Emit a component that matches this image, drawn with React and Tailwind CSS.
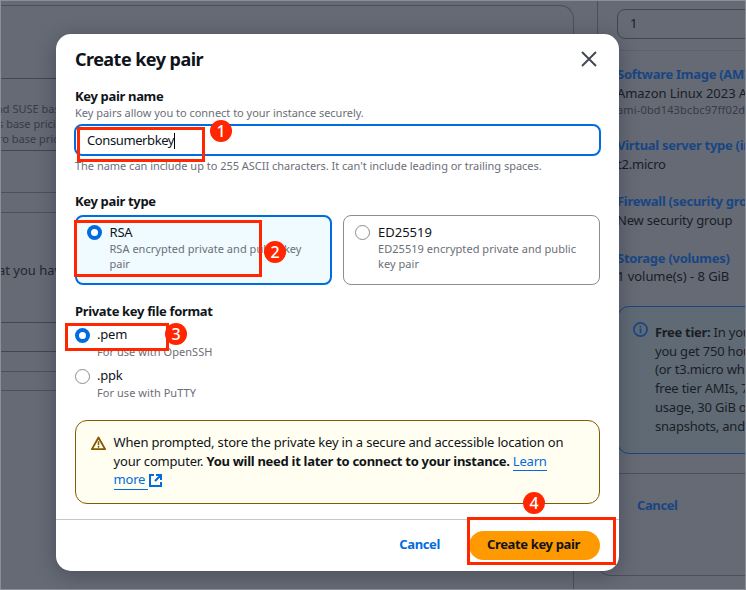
const Badge = ({ n, className }) => (
  <div className={`absolute flex size-[22px] items-center justify-center rounded-full bg-[#ff2600] font-['Noto_Sans',sans-serif] text-[16px] font-medium leading-none text-white ${className}`}>
    {n}
  </div>
);

const Mark = ({ className }) => <div className={`absolute border-[#ff2600] ${className}`} />;

const Radio = ({ checked }) => (
  <span className={`flex size-[15px] shrink-0 items-center justify-center rounded-full ${checked ? "bg-[#006ce0]" : "border border-[#8c8c94] bg-white"}`}>
    {checked && <span className="size-[6.4px] rounded-full bg-white" />}
  </span>
);

const Title = ({ children, className }) => (
  <div className={`text-[13px] font-bold leading-[18px] tracking-[-0.33px] ${className}`}>{children}</div>
);

const Hint = ({ children, className }) => (
  <div className={`whitespace-nowrap text-[11px] leading-[15px] text-[#6c6e78] ${className}`}>{children}</div>
);

function LeftPanel() {
  return (
    <div className="mt-[5px] w-[574px] shrink-0 rounded-tr-[14px] border-r border-t border-[#4c505c]">
      <div className="h-[73px] border-b border-[#424650]" />
      <div className="h-[72px] overflow-hidden whitespace-nowrap border-b border-[#424650] pt-[22px] text-[11px] leading-[15px] text-[#373b44]">
        <div className="-ml-1">nd SUSE base</div>
        <div className="-ml-[2px]">s base pricing</div>
        <div className="-ml-[2px]">ro base pricing</div>
      </div>
      <div className="h-[42px] border-b border-[#4c505c]" />
      <div className="h-5 border-b border-[#4c505c]" />
      <div className="h-[110px] border-b border-[#424650] pt-[48px] text-[13px] leading-[18px] text-[#23272f]">
        <div className="-ml-[2px] whitespace-nowrap">at you have</div>
      </div>
      <div className="h-[29px] border-b border-[#424650]" />
      <div className="h-5 border-b border-[#4c505c]" />
      <div className="h-[19px] border-b border-[#4c505c]" />
    </div>
  );
}

function SummaryPanel() {
  return (
    <div className="ml-[23px] flex h-[575.5px] w-[149px] flex-col overflow-hidden whitespace-nowrap rounded-bl-[14px] border-b border-l border-[#4c505c] text-[13px] leading-[18px] tracking-[-0.2px] text-[#191e26]">
      <div className="ml-[19px] mt-[9px] h-[30px] w-[170px] rounded-[8px] border border-[#424650] pl-[12px] pt-[4px]">1</div>
      <div className="mt-[11px] h-px bg-[#5c616c]" />
      <div className="ml-[19px] mt-[14px] font-bold tracking-[-0.28px] text-[#194682]">Software Image (AMI)</div>
      <div className="ml-[19px] mt-px h-[18px] tracking-[-0.05px]">Amazon Linux 2023 AMI</div>
      <div className="ml-[19px] text-[11px] leading-4 tracking-[0.15px] text-[#373b44]">ami-0bd143bcbc97ff02d</div>
      <div className="ml-[19px] mt-[18px] font-bold tracking-[-0.28px] text-[#194682]">Virtual server type (instance type)</div>
      <div className="ml-[19px] mt-px">t2.micro</div>
      <div className="ml-[19px] mt-[19px] font-bold tracking-[-0.28px] text-[#194682]">Firewall (security group)</div>
      <div className="ml-[19px] mt-px">New security group</div>
      <div className="ml-[19px] mt-[20px] font-bold tracking-[-0.28px] text-[#194682]">Storage (volumes)</div>
      <div className="ml-[19px] tracking-[-0.05px]">1 volume(s) - 8 GiB</div>
      <div className="ml-[19px] mt-[21px] flex h-[148px] w-[200px] shrink-0 gap-[7px] rounded-[12px] border border-[#194682] bg-[#5f6a75] pl-[15px] pt-[15px]">
        <svg className="size-[15px] shrink-0" viewBox="0 0 16 16" fill="none" stroke="#194682" strokeWidth="1.8">
          <circle cx="8" cy="8" r="7" />
          <path d="M8 7v5M8 4v1.8" />
        </svg>
        <div className="pt-px text-[13px] leading-[18.7px] tracking-[-0.2px]">
          <div><b className="tracking-[-0.3px]">Free tier:</b> In your first year</div>
          <div>you get 750 hours</div>
          <div>(or t3.micro where</div>
          <div>free tier AMIs, 750</div>
          <div>usage, 30 GiB of</div>
          <div>snapshots, and 100</div>
        </div>
      </div>
      <div className="mt-[19px] h-px bg-[#4c505c]" />
      <div className="ml-[39px] mt-[22px] font-bold tracking-[-0.4px] text-[#194682]">Cancel</div>
    </div>
  );
}

function Dialog() {
  return (
    <div className="absolute left-[56px] top-[34px] flex h-[537px] w-[563px] flex-col rounded-[15px] bg-white shadow-[0_4px_20px_1px_rgba(0,7,22,0.25)]">
      <div className="flex h-[53px] items-start justify-between pl-[19px] pr-[22px] pt-[13px]">
        <h1 className="text-[18px] font-bold leading-6 tracking-[-0.54px]">Create key pair</h1>
        <svg className="mt-1 size-4" viewBox="0 0 16 16" fill="none" stroke="#424650" strokeWidth="1.9">
          <path d="M1 1l14 14M15 1L1 15" />
        </svg>
      </div>
      <div className="flex h-[432px] flex-col px-[19px]">
        <Title>Key pair name</Title>
        <Hint className="tracking-[-0.02px]">Key pairs allow you to connect to your instance securely.</Hint>
        <div className="-ml-px mt-[4px] flex h-[32px] w-[527px] shrink-0 items-center rounded-[8px] border-2 border-[#006ce0] pl-[11px] pt-px text-[13px] tracking-[-0.4px]">
          Consumerbkey<span className="h-4 w-px bg-black" />
        </div>
        <Hint className="mt-[2px] tracking-[-0.02px]">The name can include up to 255 ASCII characters. It can't include leading or trailing spaces.</Hint>
        <Title className="mt-[19px]">Key pair type</Title>
        <div className="mt-[5px] flex h-[70px] w-[525px] shrink-0 gap-[11px]">
          <div className="flex w-[257px] gap-[7.5px] rounded-[8px] border-2 border-[#006ce0] bg-[#f0fbff] pl-[10px] pt-[8px]">
            <Radio checked />
            <div className="text-[13px] leading-[18px]">
              <div className="-mt-[2px] tracking-[-0.2px]">RSA</div>
              <Hint className="tracking-[0.03px]">RSA encrypted private and public key<br />pair</Hint>
            </div>
          </div>
          <div className="flex w-[257px] gap-2 rounded-[8px] border border-[#8c8c94] pl-[11px] pt-[9px]">
            <Radio />
            <div className="text-[13px] leading-[18px]">
              <div className="-mt-[2px]">ED25519</div>
              <Hint className="tracking-[0.05px]">ED25519 encrypted private and public<br />key pair</Hint>
            </div>
          </div>
        </div>
        <Title className="mt-[17px]">Private key file format</Title>
        <div className="mt-[8px] flex h-[41px] shrink-0 gap-[7px] text-[13px] leading-[18px]">
          <Radio checked />
          <div>
            <div className="-mt-[3px] mb-px tracking-[-0.2px]">.pem</div>
            <Hint className="tracking-[0.04px]">For use with OpenSSH</Hint>
          </div>
        </div>
        <div className="flex h-[41px] shrink-0 gap-[7px] text-[13px] leading-[18px]">
          <Radio />
          <div>
            <div className="-mt-[3px] mb-px tracking-[-0.2px]">.ppk</div>
            <Hint className="tracking-[0.05px]">For use with PuTTY</Hint>
          </div>
        </div>
        <div className="mt-[10px] flex h-[84px] w-[525px] shrink-0 gap-[7.5px] rounded-[12px] border border-[#855900] bg-[#fffef0] pl-[15px] pt-[15px]">
          <svg className="size-[15px] shrink-0" viewBox="0 0 16 16" fill="none" stroke="#855900" strokeWidth="2" strokeLinejoin="round">
            <path d="M8 1.6L15 14H1z" />
            <path d="M8 5.5v4M8 10.5v2" strokeWidth="1.6" />
          </svg>
          <div className="whitespace-nowrap text-[13px] leading-[18.5px] tracking-[-0.185px]">
            <div className="-mt-[3px]">When prompted, store the private key in a secure and accessible location on</div>
            <div>your computer. <b className="tracking-[-0.29px]">You will need it later to connect to your instance.</b> <span className="border-b border-[#006ce0] text-[#006ce0]">Learn</span></div>
            <div className="flex text-[#006ce0]">
              <span className="whitespace-pre border-b border-[#006ce0]">more </span>
              <svg className="ml-px mt-[4px] size-[13px]" viewBox="0 0 13 13" fill="none" stroke="#006ce0" strokeWidth="2">
                <path d="M5 1H1V12H12V8M7 1H12V6M12 1L6 7" />
              </svg>
            </div>
          </div>
        </div>
      </div>
      <div className="flex flex-1 items-center justify-end gap-[29px] border-t border-[#c6c6cd] pr-[19px] text-[13px] font-bold tracking-[-0.36px]">
        <span className="-mt-[2px] text-[#006ce0]">Cancel</span>
        <span className="flex h-[29px] w-[131px] items-center justify-center rounded-full bg-[#ff9900] pb-[2px] pr-[2px]">Create key pair</span>
      </div>
    </div>
  );
}

export default function App() {
  return (
    <div className="relative h-[590px] w-[746px] overflow-hidden bg-[#656a75] font-['Noto_Sans',sans-serif] text-[#0f141a]">
      <div className="flex h-full">
        <LeftPanel />
        <SummaryPanel />
      </div>
      <div className="absolute inset-0 border border-[#8b8f98]" />
      <Dialog />
      <Mark className="left-[77px] top-[127px] h-[35px] w-[128px] border-[3px]" />
      <Mark className="left-[74px] top-[220px] h-[57px] w-[188px] border-[3px]" />
      <Mark className="left-[65px] top-[323px] h-[28px] w-[104px] border-[3px]" />
      <Mark className="left-[467px] top-[517px] h-[48px] w-[149px] border-[3px]" />
      <Badge n="1" className="left-[210px] top-[120px]" />
      <Badge n="2" className="left-[264px] top-[241px]" />
      <Badge n="3" className="left-[165px] top-[323px]" />
      <Badge n="4" className="left-[523px] top-[492px]" />
    </div>
  );
}
